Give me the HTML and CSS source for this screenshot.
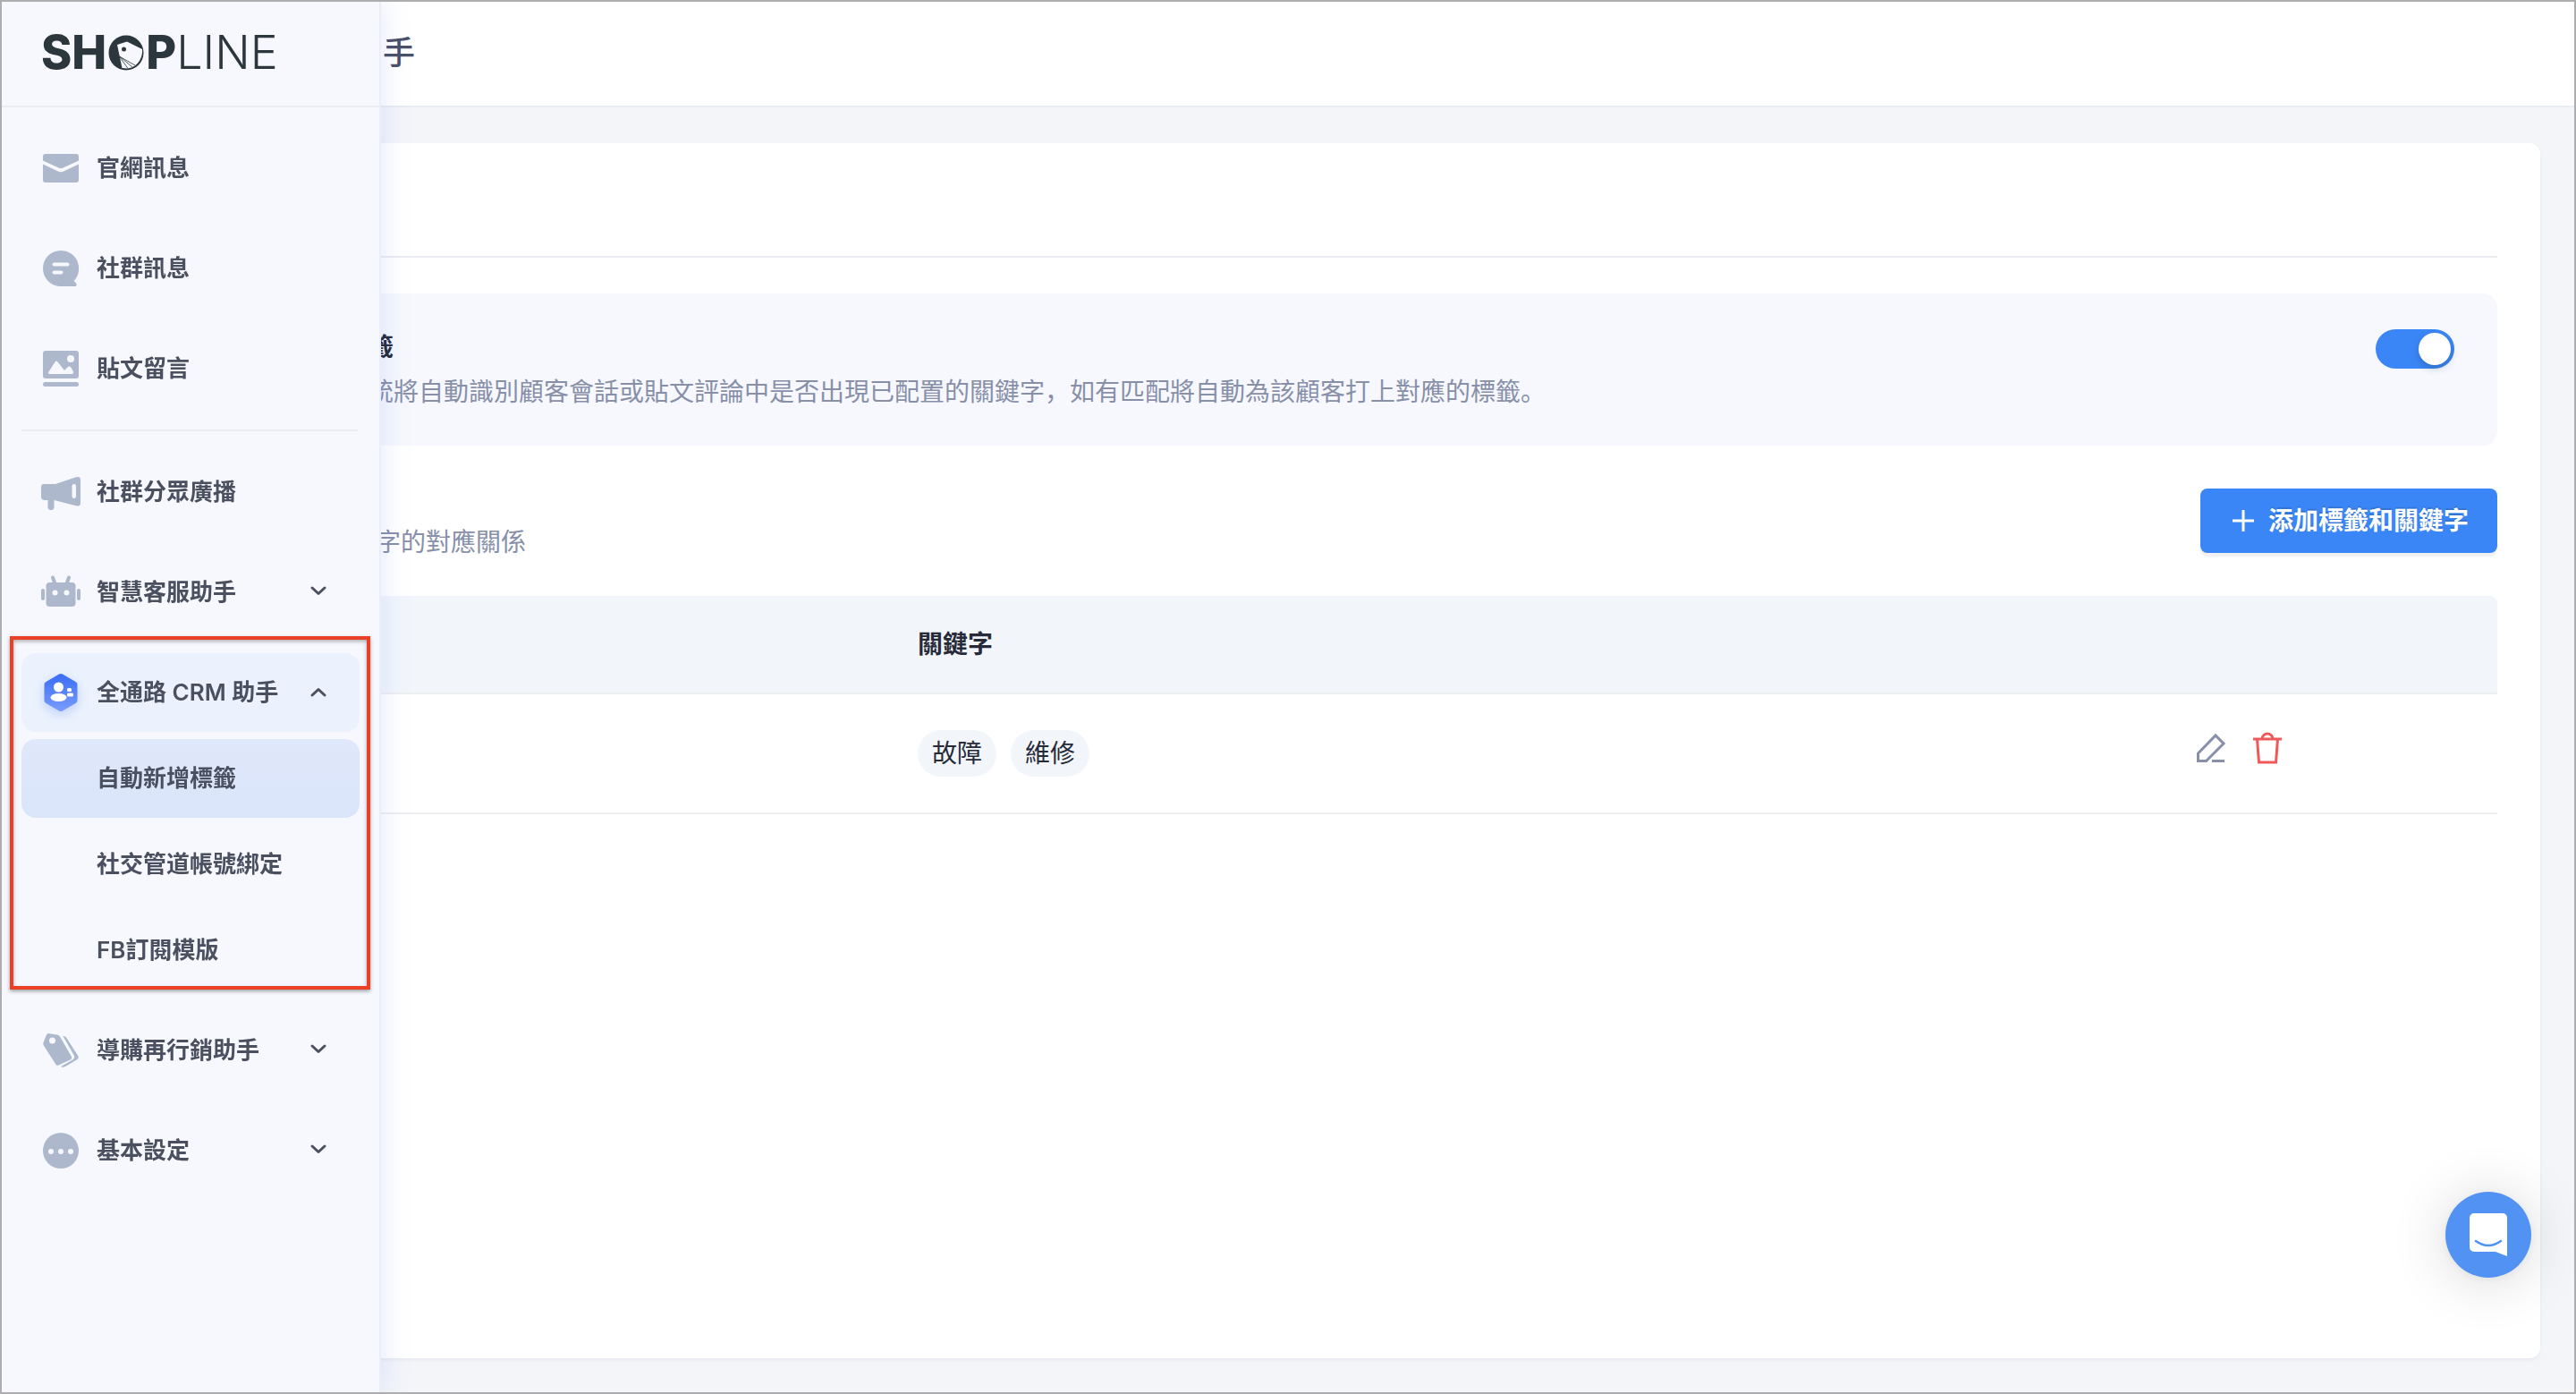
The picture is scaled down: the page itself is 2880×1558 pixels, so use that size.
FILE: index.html
```html
<!DOCTYPE html>
<html lang="zh-CN">

<head>
    <meta charset="UTF-8">
    <meta name="viewport" content="width=device-width, initial-scale=1.0">
    <title>SHOPLINE</title>
    <link rel="stylesheet" href="styles.css">
</head>

<body>
    <aside class="sidebar">
        <a class="logo" href="#">
            <span class="logo-bold">SH</span>
            <svg class="logo-mark" viewBox="0 0 40 40">
                <circle cx="20" cy="20" r="19.5" fill="#2c363d"/>
                <path d="M10 11 L21 7.500 L38 16 C39 26 32 37 21 37.500 L15.500 37 Z" fill="#f6f8fd"/>
                <circle cx="17.500" cy="16" r="2.500" fill="#2c363d"/>
                <path d="M12.500 24 L30 34 M12.500 24 L27 36 M13 25 L22 37.500" stroke="#2c363d" stroke-width="0.800" fill="none"/>
            </svg>
            <span class="logo-bold">P</span>
            <span class="logo-light">LINE</span>
        </a>

        <nav class="menu">
            <a class="menu-item" href="#">
                <svg class="menu-icon" viewBox="0 0 44 44">
                    <path d="M5 6h34a3 3 0 0 1 3 3v4.500L24.500 21.500a5 5 0 0 1-5 0L2 13.500V9a3 3 0 0 1 3-3z"/>
                    <path d="M2 17.500l17 8a7 7 0 0 0 6 0l17-8V35a3 3 0 0 1-3 3H5a3 3 0 0 1-3-3z"/>
                </svg>
                官網訊息
            </a>
            <a class="menu-item" href="#">
                <svg class="menu-icon" viewBox="0 0 44 44">
                    <path d="M22 2a20 20 0 0 1 14.500 34l2.500 2.500a2 2 0 0 1-1.500 3.500H22a20 20 0 0 1 0-40z"/>
                    <path d="M14.500 17.500h15M14.500 26.500h8" class="cut-line"/>
                </svg>
                社群訊息
            </a>
            <a class="menu-item" href="#">
                <svg class="menu-icon" viewBox="0 0 44 44">
                    <rect x="2" y="2" width="40" height="31" rx="3"/>
                    <rect x="2" y="37" width="40" height="5" rx="2.500"/>
                    <circle cx="33" cy="11" r="4" class="cut"/>
                    <path d="M8.500 25.500l7-11q1.500-2 3 0L26 24l4-4q1.500-1 3 0l3 5.500q.5 2.500-2 2.500H10q-3 0-1.500-2.500z" class="cut"/>
                </svg>
                貼文留言
            </a>

            <hr class="menu-line">

            <a class="menu-item" href="#">
                <svg class="menu-icon" viewBox="0 0 44 44">
                    <path d="M3 13h13L39 5.200q5-1.200 5 3v26q0 4-5 3L14.500 31v7.500a3.500 3.500 0 0 1-7 0V31H4q-4 0-4-4V16q0-3 3-3z"/>
                    <rect x="34.500" y="13" width="4.500" height="16" rx="2.200" class="cut"/>
                </svg>
                社群分眾廣播
            </a>
            <button class="menu-item" type="button">
                <svg class="menu-icon" viewBox="0 0 44 44">
                    <rect x="5.500" y="11" width="33" height="27" rx="4"/>
                    <rect x="0" y="18" width="4" height="13" rx="2"/>
                    <rect x="40" y="18" width="4" height="13" rx="2"/>
                    <path d="M13 5.500l2.500 7M31 5.500l-2.500 7" class="antenna"/>
                    <circle cx="15.500" cy="22.500" r="3" class="cut"/>
                    <circle cx="28.500" cy="22.500" r="3" class="cut"/>
                </svg>
                智慧客服助手
                <svg class="chevron" viewBox="0 0 24 24"><path d="M5 7l7 6.500L19 7"/></svg>
            </button>

            <div class="menu-group">
                <button class="menu-item opened" type="button">
                    <svg class="menu-icon" viewBox="0 0 44 44">
                        <defs>
                            <linearGradient id="crm" x1="0" y1="0" x2="0" y2="1">
                                <stop offset="0" stop-color="#3a6df5"/>
                                <stop offset="1" stop-color="#7a9cfb"/>
                            </linearGradient>
                        </defs>
                        <path class="crm" d="M20 1.600q2-1.200 4 0L38.500 10q2 1 2 3v18q0 2-2 3L24 42.400q-2 1.200-4 0L5.500 34q-2-1-2-3V13q0-2 2-3z" fill="url(#crm)"/>
                        <circle cx="19.500" cy="16" r="5.500" fill="#fff"/>
                        <ellipse cx="19.500" cy="27.500" rx="9" ry="4.500" fill="#fff"/>
                        <rect x="29" y="17" width="5" height="4" rx="1.500" fill="#fff"/>
                        <rect x="29" y="22.500" width="7" height="4" rx="1.500" fill="#fff"/>
                    </svg>
                    全通路 CRM 助手
                    <svg class="chevron" viewBox="0 0 24 24"><path d="M5 15l7-6.500L19 15"/></svg>
                </button>
                <a class="menu-item sub active" href="#">自動新增標籤</a>
                <a class="menu-item sub" href="#">社交管道帳號綁定</a>
                <a class="menu-item sub" href="#">FB訂閱模版</a>
            </div>

            <button class="menu-item" type="button">
                <svg class="menu-icon" viewBox="0 0 44 44">
                    <path d="M8 3l10 1.500q2 .3 3 2L34 29q1 2-1 3.200L19.500 38.500q-2 1-3.200-1L2.600 16q-.8-1.500 0-3L6 4.500Q6.600 3 8 3z"/>
                    <path d="M24.500 6q2-.5 3.500 1.500l13.500 21q1 2-1 3.500L27 40q-3 1.500-5 0L36 32q2-1.500 1-4z"/>
                    <circle cx="12.500" cy="11" r="3.500" class="cut"/>
                </svg>
                導購再行銷助手
                <svg class="chevron" viewBox="0 0 24 24"><path d="M5 7l7 6.500L19 7"/></svg>
            </button>
            <button class="menu-item" type="button">
                <svg class="menu-icon" viewBox="0 0 44 44">
                    <circle cx="22" cy="22" r="20"/>
                    <circle cx="11" cy="23" r="3" class="cut"/>
                    <circle cx="22" cy="23" r="3" class="cut"/>
                    <circle cx="33" cy="23" r="3" class="cut"/>
                </svg>
                基本設定
                <svg class="chevron" viewBox="0 0 24 24"><path d="M5 7l7 6.500L19 7"/></svg>
            </button>
        </nav>
    </aside>

    <header class="header">
        <h1 class="title">手</h1>
    </header>

    <main class="card">
        <div class="card-head"></div>

        <section class="panel">
            <div class="panel-text">
                <label class="panel-title" for="autoTag">籤</label>
                <p class="desc">統將自動識別顧客會話或貼文評論中是否出現已配置的關鍵字，如有匹配將自動為該顧客打上對應的標籤。</p>
            </div>
            <input class="switch" type="checkbox" id="autoTag" checked>
        </section>

        <section class="list-head">
            <p class="desc">字的對應關係</p>
            <button class="add" type="button">
                <svg class="add-icon" viewBox="0 0 32 32"><path d="M16 4v24M4 16h24"/></svg>
                添加標籤和關鍵字
            </button>
        </section>

        <table class="table">
            <thead>
                <tr>
                    <th class="col-tag"></th>
                    <th>關鍵字</th>
                    <th class="col-action"></th>
                </tr>
            </thead>
            <tbody>
                <tr>
                    <td></td>
                    <td>
                        <div class="words">
                            <span class="word">故障</span>
                            <span class="word">維修</span>
                        </div>
                    </td>
                    <td>
                        <div class="actions">
                            <button class="action edit" type="button" aria-label="編輯">
                                <svg viewBox="0 0 40 40"><path d="M5.500 34.500V26L25 6l9 9-19.500 19.500zM21 34.500h14"/></svg>
                            </button>
                            <button class="action delete" type="button" aria-label="刪除">
                                <svg viewBox="0 0 40 40"><path d="M3 10h32M7.500 10l2 26h19l2-26M13 10a6 6 0 0 1 12 0"/></svg>
                            </button>
                        </div>
                    </td>
                </tr>
            </tbody>
        </table>
    </main>

    <button class="chat" type="button" aria-label="聊天">
        <svg viewBox="0 0 96 96">
            <path d="M32 24h32a5 5 0 0 1 5 5v43l-13-5H32a5 5 0 0 1-5-5V29a5 5 0 0 1 5-5z" fill="#fff"/>
            <path d="M34 55q14 10 28 0" fill="none" stroke="#5192f3" stroke-width="2.600" stroke-linecap="round"/>
        </svg>
    </button>
</body>

</html>
```

FILE: styles.css
```css
*{
    margin: 0;
    padding: 0;
    box-sizing: border-box;
}
body{
    min-height: 100vh;
    display: flex;
    flex-direction: column;
    font-family: Inter, "Noto Sans CJK SC", sans-serif;
    font-size: 28px;
    line-height: 40px;
    color: #272a38;
    background-color: #f3f5f9;
}
/* window frame */
body::after{
    content: "";
    position: fixed;
    inset: 0;
    z-index: 20;
    border: 2px solid #adadb0;
    pointer-events: none;
}
button{
    font: inherit;
    color: inherit;
    border: none;
    background: none;
    cursor: pointer;
}
a{
    color: inherit;
    text-decoration: none;
}

/* sidebar */
.sidebar{
    position: fixed;
    top: 0;
    bottom: 0;
    left: 0;
    z-index: 10;
    width: 426px;
    background-color: #f6f8fd;
    border-right: 2px solid #ebeef6;
    box-shadow: 0 0 32px rgba(70, 105, 240, 0.15);
}
.logo{
    display: flex;
    align-items: center;
    height: 120px;
    padding-left: 46px;
    border-bottom: 2px solid #eaedf2;
    color: #2c363d;
    font-size: 52px;
}
.logo-mark{
    width: 40px;
    height: 40px;
    margin: 0 2px;
}
.logo-bold{
    font-weight: 800;
}
.logo-light{
    font-weight: 300;
}
.menu{
    display: flex;
    flex-direction: column;
    gap: 24px;
    padding: 24px 22px 24px 24px;
}
.menu-item{
    display: flex;
    align-items: center;
    gap: 18px;
    width: 100%;
    height: 88px;
    padding: 0 34px 0 22px;
    border-radius: 16px;
    color: #4a505f;
    font-size: 26px;
    font-weight: 600;
    text-align: left;
}
.menu-icon{
    width: 44px;
    height: 44px;
    fill: #adb8cd;
    overflow: visible;
}
.menu-icon .cut{
    fill: #f6f8fd;
}
.menu-icon .cut-line{
    stroke: #f6f8fd;
    stroke-width: 4;
    stroke-linecap: round;
}
.menu-icon .antenna{
    stroke: #adb8cd;
    stroke-width: 4;
    stroke-linecap: round;
}
.menu-icon .crm{
    filter: drop-shadow(0 4px 6px rgba(58, 109, 245, 0.25));
}
.chevron{
    width: 24px;
    height: 24px;
    margin-left: auto;
    fill: none;
    stroke: #4a505f;
    stroke-width: 3;
    stroke-linecap: round;
    stroke-linejoin: round;
}
.menu-line{
    margin-right: 2px;
    border: none;
    border-top: 2px solid #eaedf2;
}
.menu-group{
    position: relative;
    display: flex;
    flex-direction: column;
    gap: 8px;
}
/* highlight frame */
.menu-group::after{
    content: "";
    position: absolute;
    top: -19px;
    right: -12px;
    bottom: 0;
    left: -13px;
    border: 4px solid #ea4025;
    box-shadow: 0 2px 4px rgba(0, 0, 0, 0.35), inset 0 2px 4px rgba(0, 0, 0, 0.3);
    pointer-events: none;
}
.opened{
    background-color: #ebf2fd;
}
.sub{
    padding-left: 84px;
}
.active{
    background-image: linear-gradient(#e0e8fb, #dae5f9);
}

/* page */
.header{
    display: flex;
    align-items: center;
    height: 120px;
    padding-left: 428px;
    border-bottom: 2px solid #eaedf2;
    background-color: #fff;
}
.title{
    font-size: 36px;
    font-weight: 500;
    color: #4a5068;
}
.card{
    flex: 1;
    margin: 40px 40px 40px 316px;
    padding: 0 48px;
    border-radius: 12px;
    background-color: #fff;
    box-shadow: 0 2px 4px rgba(40, 50, 90, 0.06);
}
.card-head{
    height: 128px;
    border-bottom: 2px solid #ebedf2;
}
.panel{
    display: flex;
    justify-content: space-between;
    align-items: start;
    margin-top: 40px;
    padding: 40px 48px;
    border-radius: 16px;
    background-color: #f6f8fd;
}
.panel-text{
    display: flex;
    flex-direction: column;
    gap: 10px;
}
.panel-title{
    font-weight: 600;
}
.desc{
    color: #878fa9;
}
.switch{
    appearance: none;
    width: 88px;
    height: 44px;
    padding: 4px;
    border-radius: 22px;
    background-color: #bfc5d2;
    cursor: pointer;
}
.switch::before{
    content: "";
    display: block;
    width: 36px;
    height: 36px;
    border-radius: 50%;
    background-color: #fff;
    box-shadow: 0 4px 8px rgba(0, 35, 11, 0.2);
}
.switch:checked{
    background-color: #3b86f6;
}
.switch:checked::before{
    margin-left: auto;
}
.list-head{
    display: flex;
    justify-content: space-between;
    align-items: start;
    margin: 48px 0 40px;
    padding-left: 56px;
}
.list-head .desc{
    padding-top: 40px;
}
.add{
    display: flex;
    align-items: center;
    gap: 12px;
    height: 72px;
    padding: 0 32px;
    border-radius: 8px;
    background-color: #3b86f6;
    color: #fff;
    font-weight: 600;
    text-shadow: 0 -2px 0 rgba(0, 0, 0, 0.12);
    box-shadow: 0 4px 0 #f2f2f2;
}
.add-icon{
    width: 32px;
    height: 32px;
    stroke: #fff;
    stroke-width: 3;
}
.table{
    width: 100%;
    table-layout: fixed;
    border-spacing: 0;
}
.table th{
    height: 110px;
    border-bottom: 2px solid #eeeff1;
    background-color: #f2f6fb;
    font-weight: 600;
    text-align: left;
}
.table th:last-child{
    border-top-right-radius: 8px;
}
.table td{
    height: 134px;
    border-bottom: 2px solid #eeeff1;
}
.col-tag{
    width: 662px;
}
.col-action{
    width: 340px;
}
.words{
    display: flex;
    gap: 16px;
}
.word{
    padding: 6px 16px;
    border-radius: 26px;
    background-color: #f2f6fb;
}
.actions{
    display: flex;
    gap: 24px;
    padding-bottom: 12px;
}
.action{
    width: 40px;
    height: 40px;
}
.action svg{
    display: block;
    fill: none;
    stroke: currentColor;
    stroke-width: 3;
}
.edit{
    color: #878fa9;
}
.delete{
    color: #ee5a5a;
}

/* chat bubble */
.chat{
    position: fixed;
    right: 50px;
    bottom: 130px;
    width: 96px;
    height: 96px;
    border-radius: 50%;
    background-color: #5192f3;
    box-shadow: 0 2px 12px rgba(0, 0, 0, 0.06), 0 4px 64px rgba(0, 0, 0, 0.16);
}
.chat svg{
    display: block;
}
```
